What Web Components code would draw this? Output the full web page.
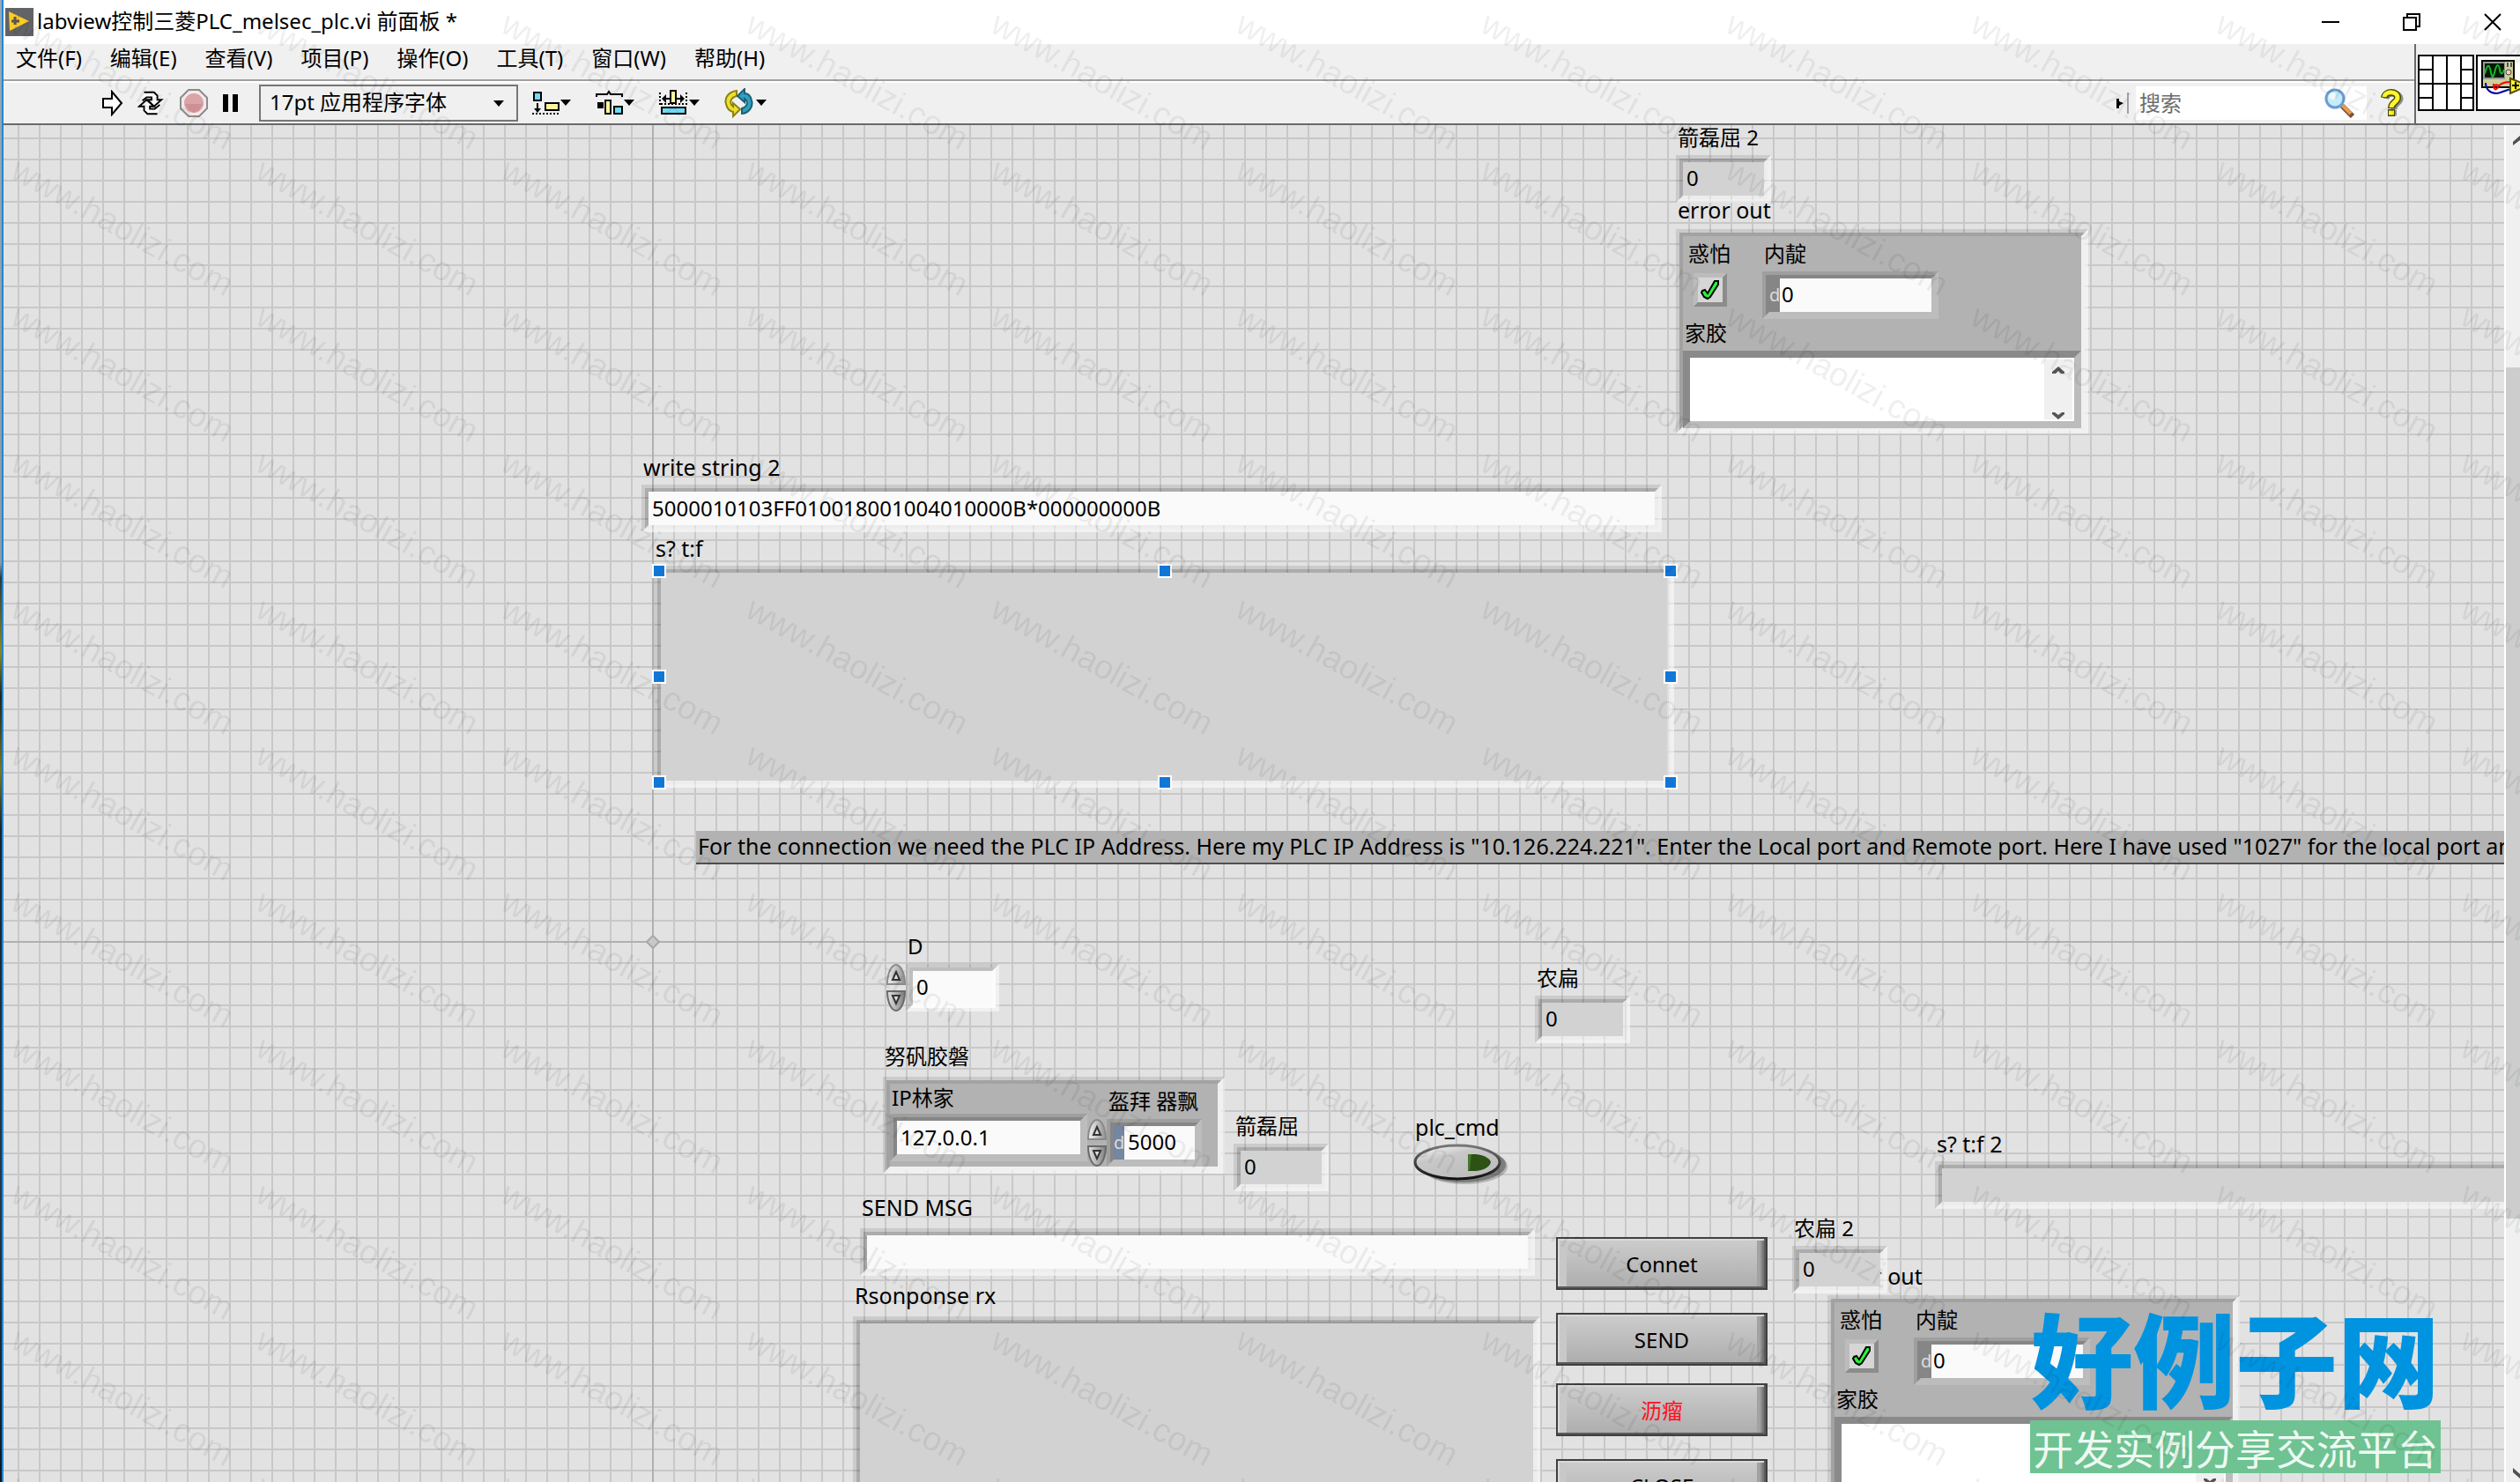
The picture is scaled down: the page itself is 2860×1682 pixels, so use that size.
<!DOCTYPE html>
<html lang="zh-CN">
<head>
<meta charset="utf-8">
<title>labview控制三菱PLC_melsec_plc.vi 前面板 *</title>
<style>
	html, body {
		margin: 0;
		height: 100%;
	}
	body {
		display: flex;
		overflow: hidden;
		font: 24px/32px "Noto Sans", "Noto Sans CJK SC", sans-serif;
		color: #000;
	}
</style>
</head>
<body>
<vi-window>
	<vi-title slot="title">labview控制三菱PLC_melsec_plc.vi 前面板 *</vi-title>
	<vi-menu slot="menu" items="文件(F),编辑(E),查看(V),项目(P),操作(O),工具(T),窗口(W),帮助(H)"></vi-menu>
	<vi-toolbar slot="toolbar"></vi-toolbar>
	<vi-connector slot="connector"></vi-connector>
	<vi-panel slot="panel">
		<vi-field kind="indicator" label="箭磊屈 2" value="0" style="left:1898px;top:-2px;width:108px"></vi-field>
		<vi-error style="left:1898px;top:80px"></vi-error>
		<vi-field kind="string" label="write string 2" value="5000010103FF010018001004010000B*000000000B" style="left:724px;top:372px;width:1158px"></vi-field>
		<vi-field kind="memo" label="s? t:f" style="left:738px;top:464px;width:1158px;--memo:252px"></vi-field>
		<vi-handles style="left:738px;top:500px;width:1160px;height:252px"></vi-handles>
		<vi-comment style="left:786px;top:801px">For the connection we need the PLC IP Address. Here my PLC IP Address is "10.126.224.221". Enter the Local port and Remote port. Here I have used "1027" for the local port and "5000" for the remote port.</vi-comment>
		<vi-origin style="left:729px;top:919px"></vi-origin>
		<vi-numeric spin label="D" value="0" style="left:1002px;top:916px;width:128px"></vi-numeric>
		<vi-field kind="indicator" label="农扁" value="0" style="left:1738px;top:952px;width:108px"></vi-field>
		<vi-address style="left:998px;top:1041px"></vi-address>
		<vi-field kind="indicator" label="箭磊屈" value="0" style="left:1396px;top:1120px;width:108px"></vi-field>
		<vi-led label="plc_cmd" style="left:1600px;top:1121px"></vi-led>
		<vi-field kind="string" label="SEND MSG" style="left:972px;top:1212px;width:766px;--gap:8px"></vi-field>
		<vi-field kind="memo" label="Rsonponse rx" style="left:964px;top:1312px;width:780px;--gap:8px;--memo:260px"></vi-field>
		<vi-button style="left:1762px;top:1262px">Connet</vi-button>
		<vi-button style="left:1762px;top:1348px">SEND</vi-button>
		<vi-button style="left:1762px;top:1428px;--ink:#ff0f1e">沥瘤</vi-button>
		<vi-button style="left:1762px;top:1514px">CLOSE</vi-button>
		<vi-field kind="indicator" label="s? t:f 2" style="left:2192px;top:1140px;width:760px"></vi-field>
		<vi-error style="left:2070px;top:1290px"></vi-error>
		<vi-field kind="indicator" label="农扁 2" value="0" style="left:2030px;top:1236px;width:108px"></vi-field>
	</vi-panel>
</vi-window>
<site-badge></site-badge>
<site-watermark text="www.haolizi.com"></site-watermark>

<script>
// sunken double frame shared by every panel control
const BEVEL = `
	.bevel, .bevel > .in {
		box-sizing: border-box;
		border: 4px solid;
		background-clip: padding-box;
	}
	.bevel { border-color: rgba(0,0,0,.1) rgba(255,255,255,.55) rgba(255,255,255,.55) rgba(0,0,0,.1); }
	.bevel > .in {
		display: block;
		width: 100%;
		margin: 0;
		border-color: rgba(0,0,0,.24) rgba(255,255,255,.4) rgba(255,255,255,.4) rgba(0,0,0,.24);
		border-radius: 0;
		outline: 0;
		font: inherit;
		color: inherit;
	}
	.dark { border-color: rgba(0,0,0,.1) rgba(255,255,255,.14) rgba(255,255,255,.14) rgba(0,0,0,.1); }
	.dark > .in { border-color: #868686 #bcbcbc #bcbcbc #868686; }
	.latin { font-size: 25px; }
`;

// latin-only captions are set one size up
const captionClass = text => /^[\x00-\x7f]+$/.test(text) ? 'latin' : '';

class BaseElement extends HTMLElement {
	constructor() {
		super();
		this.attachShadow({ mode: 'open' });
	}

	attr(name) { return this.getAttribute(name) || ''; }

	connectedCallback() { this.render(); }
}

class ViWindow extends BaseElement {
	render() {
		this.shadowRoot.innerHTML = `
			<style>
				:host {
					flex: 1;
					min-width: 0;
					display: flex;
					padding-left: 2px;
					background: linear-gradient(#93aabb, #8a9aa8 38%, #2c3a3a 39%, #8a8a20 44%, #1c2420 47%, #77761d 52%, #17202a 56%, #24384c 80%, #101820);
				}
				.frame {
					flex: 1;
					min-width: 0;
					display: flex;
					flex-direction: column;
					border-left: 2px solid #2585d0;
					background: #f0f0f0;
				}
				.head {
					display: flex;
					border-bottom: 2px solid #696969;
				}
				.bars { flex: 1; min-width: 0; }
				slot[name=menu] {
					display: block;
					height: 40px;
					border-bottom: 2px solid #a0a0a0;
				}
				slot[name=toolbar] {
					display: block;
					border-top: 2px solid #fff;
				}
				.body { flex: 1; display: flex; min-height: 0; }
			</style>
			<div class="frame">
				<slot name="title"></slot>
				<div class="head">
					<div class="bars"><slot name="menu"></slot><slot name="toolbar"></slot></div>
					<slot name="connector"></slot>
				</div>
				<div class="body"><slot name="panel"></slot><vi-scrollbar></vi-scrollbar></div>
			</div>
		`;
	}
}

class ViTitle extends BaseElement {
	render() {
		this.shadowRoot.innerHTML = `
			<style>
				:host {
					display: flex;
					align-items: center;
					height: 50px;
					background: #fff;
				}
				.logo { width: 32px; height: 32px; margin: 0 4px 0 2px; }
				h1 { flex: 1; margin: 0; padding-bottom: 2px; font: inherit; white-space: nowrap; }
				button {
					width: 62px;
					height: 50px;
					margin-left: 30px;
					padding: 0;
					border: 0;
					background: none;
				}
				button svg { display: block; margin: auto; }
			</style>
			<svg class="logo" viewBox="0 0 32 32"><path fill="#626366" d="M0 0h32v32H0z"/><path fill="#fecb25" d="M4 4l23 11L5 26z"/><path stroke="#55565a" stroke-width="3" d="M11 10v9M7 15h9"/></svg>
			<h1><slot></slot></h1>
			<button aria-label="最小化"><svg width="20" height="20"><path stroke="#000" stroke-width="2" d="M0 10h20"/></svg></button>
			<button aria-label="还原"><svg width="20" height="20"><path fill="none" stroke="#000" stroke-width="2" d="M1 5h14v14H1zM5 5V1h14v14h-4"/></svg></button>
			<button aria-label="关闭"><svg width="20" height="20"><path stroke="#000" stroke-width="2" d="M1 1l18 18M19 1L1 19"/></svg></button>
		`;
	}
}

class ViMenu extends BaseElement {
	render() {
		const items = this.attr('items').split(',');
		this.shadowRoot.innerHTML = `
			<style>
				:host { display: block; }
				nav { display: flex; gap: 32px; padding: 0 14px; }
				button {
					padding: 0;
					border: 0;
					background: none;
					font: inherit;
					color: inherit;
					white-space: nowrap;
				}
			</style>
			<nav>${ items.map(item => `<button>${ item }</button>`).join('') }</nav>
		`;
	}
}

class ViToolbar extends BaseElement {
	render() {
		const arrow = '<path d="M0 0h12l-6 7z"/>';
		this.shadowRoot.innerHTML = `
			<style>
				:host {
					display: flex;
					align-items: center;
					height: 46px;
					padding-left: 112px;
				}
				button { padding: 0; border: 0; background: none; }
				svg { display: block; }
				.run { display: flex; align-items: center; gap: 16px; }
				.font { position: relative; margin: 0 16px 0 22px; }
				.font svg { position: absolute; right: 14px; top: 18px; pointer-events: none; }
				select {
					appearance: none;
					display: block;
					width: 294px;
					height: 42px;
					padding: 0 12px 2px 10px;
					border: 2px solid #767676;
					border-radius: 0;
					background: #f0f0f0;
					font: inherit;
					color: inherit;
				}
				.align { display: flex; gap: 26px; }
				.search { display: flex; align-items: center; margin-left: auto; }
				.box {
					display: flex;
					align-items: center;
					width: 262px;
					height: 38px;
					margin-left: 8px;
					background: #fff;
				}
				input {
					flex: 1;
					min-width: 0;
					padding: 0 4px;
					border: 0;
					outline: 0;
					background: none;
					font: inherit;
				}
				input::placeholder { color: #6d6d6d; }
				.box svg { margin-right: 14px; }
				.help { margin: 0 12px 0 16px; }
			</style>
			<div class="run">
				<button aria-label="运行"><svg width="24" height="30"><path fill="#fff" stroke="#000" stroke-width="2" d="M1 10h10V2l11 13-11 13v-8H1z"/></svg></button>
				<button aria-label="连续运行"><svg width="32" height="32" viewBox="1 0 34 32"><path fill="#fff" stroke="#000" stroke-width="2" d="M9 3h12l4 4v5h5l-9 8-8-8h5V9h-6L7 13M25 29H13l-4-4v-5H3l9-8 9 8h-5v3h6l6-5"/></svg></button>
				<button aria-label="中止执行"><svg width="32" height="32"><path fill="#f4e9e9" stroke="#8b8b8b" stroke-width="2" d="M10 1h12l9 9v12l-9 9H10l-9-9V10z"/><circle cx="16" cy="16" r="11" fill="#d9a5a8"/><path fill="#cf9094" d="M6 17h20l-4 7-6 3-6-3z"/></svg></button>
				<button aria-label="暂停"><svg width="20" height="24"><path d="M1 2h6v20H1zM12 2h6v20h-6z"/></svg></button>
			</div>
			<div class="font">
				<select aria-label="字体"><option>17pt 应用程序字体</option></select>
				<svg width="14" height="10">${ arrow }</svg>
			</div>
			<div class="align">
				<button aria-label="对齐对象"><svg width="46" height="30"><path fill="#6fdcf7" stroke="#000" stroke-width="2" d="M2 3h8v9H2z"/><path fill="#fdf6a0" stroke="#000" stroke-width="2" d="M15 15h15v8H15z"/><path d="M5 15h2v6h3l-4 5-4-5h3z"/><path stroke="#000" stroke-width="2" stroke-dasharray="2 2" d="M0 27h30"/><g transform="translate(32 11)">${ arrow }</g></svg></button>
				<button aria-label="分布对象"><svg width="46" height="30"><path fill="none" stroke="#000" stroke-width="2" d="M1 8V5h12l2-3 2 3h13v3"/><path d="M2 14h7v7H2z"/><path fill="#fdf6a0" stroke="#000" stroke-width="2" d="M11 12h6v15h-6z"/><path fill="#6fdcf7" stroke="#000" stroke-width="2" d="M21 19h9v8h-9z"/><g transform="translate(32 11)">${ arrow }</g></svg></button>
				<button aria-label="调整对象大小"><svg width="48" height="32"><path stroke="#000" stroke-width="2" stroke-dasharray="2 2" d="M1 4v14M31 4v14M2 17h28"/><path d="M3 11l5-5v4h4v2H8v4zM29 11l-5-5v4h-4v2h4v4z"/><path fill="#fdf6a0" stroke="#000" stroke-width="2" d="M13 2h6v14h-6z"/><path fill="#6fdcf7" stroke="#000" stroke-width="2" d="M3 21h27v7H3z"/><g transform="translate(34 12)">${ arrow }</g></svg></button>
				<button aria-label="重新排序"><svg width="50" height="34"><path fill="#eedf2b" stroke="#8b8212" stroke-width="2" d="M14 3C4 4 0 12 2 18c1 5 4 8 8 9v5l8-8-8-7v4c-5-4-3-10 4-12z"/><path fill="#2f9fc0" stroke="#1d6075" stroke-width="2" d="M20 29c9-1 13-9 11-15-1-5-4-8-8-8V1l-8 8 8 7v-4c5 4 3 9-3 11z"/><g transform="translate(36 13)">${ arrow }</g></svg></button>
			</div>
			<div class="search">
				<svg width="14" height="26"><path d="M0 8h3v3l5 2-5 3v3H0z"/><path fill="#a0a0a0" d="M12 1h2v24h-2z"/></svg>
				<label class="box"><input type="text" placeholder="搜索" aria-label="搜索"><svg width="34" height="34"><path stroke="#77503a" stroke-width="6" d="M20 20l12 12"/><path stroke="#e79b4f" stroke-width="4" d="M20 19l10 10"/><circle cx="12" cy="12" r="10" fill="#c5ecfb" stroke="#6b9ed0" stroke-width="3"/><circle cx="9" cy="9" r="4" fill="#fff" opacity=".7"/></svg></label>
				<button class="help" aria-label="即时帮助"><svg width="26" height="32"><path fill="none" stroke="#8f8f8f" stroke-width="7" d="M6 11c1-8 15-8 16 0 0 5-7 5-7 12M12 27h6"/><path fill="none" stroke="#4a4700" stroke-width="8" d="M4 10c1-8 15-8 15 0 0 5-7 5-7 12M8 27h8"/><path fill="none" stroke="#fdf52c" stroke-width="5" d="M4 9c1-7 15-7 15 1 0 5-7 5-7 11M9 27h6"/></svg></button>
			</div>
		`;
	}
}

class ViConnector extends BaseElement {
	render() {
		this.shadowRoot.innerHTML = `
			<style>
				:host {
					display: flex;
					gap: 2px;
					width: 116px;
					padding: 12px 0 0 2px;
					border-left: 2px solid #696969;
					overflow: hidden;
				}
				svg { flex: none; }
			</style>
			<svg width="64" height="64"><path fill="#fff" stroke="#000" stroke-width="2" d="M1 1h62v62H1z"/><path fill="none" stroke="#000" stroke-width="2" d="M17 1v62M33 1v62M49 1v62M1 33h62M1 17h16M49 17h14M1 49h16M49 49h14"/></svg>
			<svg width="64" height="64"><path fill="#fff" stroke="#000" stroke-width="2" d="M1 1h62v62H1z"/><path fill="#cfcf9c" stroke="#000" stroke-width="2" d="M7 7h36v30H7z"/><path fill="#999" d="M8 8h25v20H8z"/><path fill="#001b00" d="M10 10h22v16H10z"/><path fill="none" stroke="#18b52c" stroke-width="2" d="M10 22c3-12 5-12 7-2s3 4 5-3 4-6 5 0 3 6 5 0"/><circle cx="37" cy="20" r="3" fill="#ffd0b0" stroke="#444"/><path stroke="#555" stroke-width="2" d="M36 9v5M40 9v5"/><path fill="none" stroke="#0000a0" stroke-width="2" d="M11 32c0 8 6 12 12 12s10-5 20-5"/><path fill="none" stroke="#f00" stroke-width="2" d="M20 33c0 10 5 6 5 3s-6-2-4 3M25 36c4-4 8-5 14-5"/><path fill="#fdf52c" stroke="#555000" stroke-width="2" d="M39 27l20 8-20 9z"/><path stroke="#000" stroke-width="2" d="M41 35h8M45 31v8"/></svg>
		`;
	}
}

class ViScrollbar extends BaseElement {
	render() {
		this.shadowRoot.innerHTML = `
			<style>
				:host {
					flex: none;
					width: 16px;
					display: flex;
					flex-direction: column;
					justify-content: space-between;
					align-items: flex-end;
					border-left: 2px solid #fff;
					background: linear-gradient(#cdcdcd, #cdcdcd) 0 275px / 100% 966px no-repeat #f0f0f0;
				}
				svg { display: block; margin: 12px 0 4px; }
			</style>
			<svg width="8" height="12"><path d="M0 11V7l8-7v5z" fill="#505050"/></svg>
			<svg width="8" height="12"><path d="M0 0v5l8 7V7z" fill="#505050"/></svg>
		`;
	}
}

class ViPanel extends BaseElement {
	render() {
		this.shadowRoot.innerHTML = `
			<style>
				:host {
					flex: 1;
					min-width: 0;
					display: block;
					position: relative;
					overflow: hidden;
					background:
						linear-gradient(#b0b0b0, #b0b0b0) 736px 0 / 2px 100% no-repeat,
						linear-gradient(#b0b0b0, #b0b0b0) 0 926px / 100% 2px no-repeat,
						linear-gradient(90deg, #c8c8c8 2px, transparent 2px) 16px 0 / 24px 24px,
						linear-gradient(#c8c8c8 2px, transparent 2px) 0 14px / 24px 24px,
						#e2e2e2;
				}
				::slotted(*) { position: absolute; }
			</style>
			<slot></slot>
		`;
	}
}

class ViField extends BaseElement {
	render() {
		const kind = this.attr('kind');
		const value = this.attr('value');
		const label = this.attr('label');
		const control = {
			indicator: `<output class="in" id="f">${ value }</output>`,
			string: `<input class="in" id="f" type="text" value="${ value }">`,
			memo: `<textarea class="in" id="f" readonly></textarea>`
		}[kind];
		this.shadowRoot.innerHTML = `
			<style>
				${ BEVEL }
				:host { display: flex; flex-direction: column; gap: var(--gap, 4px); }
				label { padding-left: 2px; height: 32px; white-space: nowrap; }
				.bevel > .in { height: 46px; padding: 2px 4px; background-color: #d2d2d2; }
				.bevel > input.in { padding: 0 4px 2px; background-color: #fafafa; }
				.bevel > textarea.in { height: calc(var(--memo) - 8px); resize: none; }
			</style>
			<label for="f" class="${ captionClass(label) }">${ label }</label>
			<div class="bevel ${ this.hasAttribute('dark') ? 'dark' : '' }">${ control }</div>
		`;
	}
}

class ViNumeric extends BaseElement {
	render() {
		const spin = this.hasAttribute('spin') ? `
			<div class="spin">
				<button aria-label="增加"><svg width="22" height="26"><defs><linearGradient id="g"><stop stop-color="#f4f4f4"/><stop offset="1" stop-color="#8f8f8f"/></linearGradient></defs><path fill="url(#g)" stroke="#8a8a8a" stroke-width="2" d="M1 23C1 10 6 1 11 1s10 9 10 22z"/><path fill="#ddd" stroke="#333" stroke-width="2" d="M7 18l4-9 4 9z"/></svg></button>
				<button aria-label="减少"><svg width="22" height="26"><defs><linearGradient id="g2"><stop stop-color="#e4e4e4"/><stop offset="1" stop-color="#7f7f7f"/></linearGradient></defs><path fill="url(#g2)" stroke="#6a6a6a" stroke-width="2" d="M1 3c0 13 5 22 10 22s10-9 10-22z"/><path fill="#ddd" stroke="#333" stroke-width="2" d="M7 8l4 9 4-9z"/></svg></button>
			</div>` : '';
		const radix = this.hasAttribute('radix') ? `<span class="radix">d</span>` : '';
		this.shadowRoot.innerHTML = `
			<style>
				${ BEVEL }
				:host { display: flex; flex-direction: column; gap: 4px; }
				label { padding-left: ${ spin ? 24 : 2 }px; height: 32px; white-space: nowrap; }
				.row { display: flex; }
				.spin { display: flex; flex-direction: column; justify-content: space-between; width: 22px; }
				button { padding: 0; border: 0; background: none; }
				svg { display: block; }
				.bevel { flex: 1; min-width: 0; }
				.bevel > .in { display: flex; height: 46px; background: #fafafa; }
				.radix {
					width: 12px;
					background: var(--radix, #868686);
					color: #dcdcdc;
					font-size: 20px;
					line-height: 38px;
				}
				input {
					flex: 1;
					width: 0;
					padding: 0 var(--pad, 4px) 2px;
					border: 0;
					outline: 0;
					background: none;
					font: inherit;
				}
			</style>
			<label for="n">${ this.attr('label') }</label>
			<div class="row">
				${ spin }
				<div class="bevel ${ radix ? 'dark' : '' }"><div class="in">${ radix }<input id="n" type="text" value="${ this.attr('value') }"></div></div>
			</div>
		`;
	}
}

class ViError extends BaseElement {
	render() {
		this.shadowRoot.innerHTML = `
			<style>
				${ BEVEL }
				:host { display: block; width: 468px; }
				h2 { margin: 0 0 6px; padding-left: 2px; font-size: 25px; font-weight: 400; }
				.bevel > .in { height: 224px; background: #b2b2b2; border-color: #a2a2a2 #f0f0f0 #f0f0f0 #a2a2a2; }
				.top { display: flex; gap: 36px; padding: 4px 0 0 6px; }
				.status { display: flex; flex-direction: column; gap: 6px; }
				.status input {
					appearance: none;
					box-sizing: border-box;
					width: 38px;
					height: 38px;
					margin: 0 0 0 6px;
					border: 5px solid;
					border-color: #bcbcbc #8c8c8c #8c8c8c #bcbcbc;
					background: #d6d6d6;
				}
				.tick { position: relative; display: flex; }
				.tick svg { position: absolute; left: 14px; top: 7px; pointer-events: none; }
				vi-numeric { width: 200px; --pad: 2px; }
				.source { display: block; height: 32px; padding-left: 2px; }
				.text {
					display: flex;
					box-sizing: border-box;
					height: 88px;
					margin-top: 4px;
					border: 8px solid;
					border-color: #8a8a8a #bcbcbc #bcbcbc #8a8a8a;
					background: #fff;
				}
				textarea { flex: 1; margin: 0; padding: 0; border: 0; outline: 0; resize: none; background: none; font: inherit; }
				.bar {
					display: flex;
					flex-direction: column;
					justify-content: space-between;
					align-items: center;
					width: 32px;
					margin: 2px 2px 2px 0;
					padding: 8px 0 0;
					box-sizing: border-box;
					background: #f0f0f0;
				}
				svg { display: block; }
			</style>
			<h2>error out</h2>
			<div class="bevel">
				<div class="in">
					<div class="top">
						<div class="status">
							<label for="s">惑怕</label>
							<div class="tick"><input id="s" type="checkbox" checked><svg width="22" height="24"><path fill="#28f43c" stroke="#000" stroke-width="2" d="M2 13l3-1 3 4 8-14h4v4L11 20l-3 2-4-2-3-5z"/></svg></div>
						</div>
						<vi-numeric radix label="内靛" value="0"></vi-numeric>
					</div>
					<label class="source" for="t">家胶</label>
					<div class="text">
						<textarea id="t"></textarea>
						<div class="bar">
							<svg width="14" height="8"><path d="M0 8V6l7-6 7 6v2h-4L7 5 4 8z" fill="#555"/></svg>
							<svg width="14" height="8"><path d="M0 0v2l7 6 7-6V0h-3L7 3 3 0z" fill="#555"/></svg>
						</div>
					</div>
				</div>
			</div>
		`;
	}
}

class ViAddress extends BaseElement {
	render() {
		this.shadowRoot.innerHTML = `
			<style>
				${ BEVEL }
				:host { display: block; width: 388px; }
				h2 { margin: 0 0 7px; padding-left: 2px; font: inherit; }
				.bevel > .in { display: flex; height: 102px; background: #b2b2b2; border-color: #a2a2a2 #f0f0f0 #f0f0f0 #a2a2a2; }
				vi-field { width: 224px; --gap: 2px; }
				vi-numeric { width: 130px; margin-top: 4px; --radix: #7486a0; }
			</style>
			<h2>努矾胶磐</h2>
			<div class="bevel">
				<div class="in">
					<vi-field kind="string" dark label="IP林家" value="127.0.0.1"></vi-field>
					<vi-numeric spin radix label="盔拜 器飘" value="5000"></vi-numeric>
				</div>
			</div>
		`;
	}
}

class ViLed extends BaseElement {
	render() {
		this.shadowRoot.innerHTML = `
			<style>
				:host { display: flex; flex-direction: column; }
				label { padding-left: 2px; font-size: 25px; }
				button { padding: 0; border: 0; background: none; }
				svg { display: block; }
			</style>
			<label for="b">${ this.attr('label') }</label>
			<button id="b"><svg width="110" height="54">
				<defs>
					<linearGradient id="g" x1="0" y1="0" x2=".6" y2="1"><stop stop-color="#fff"/><stop offset=".4" stop-color="#c8c8c8"/><stop offset="1" stop-color="#bcbcbc"/></linearGradient>
					<linearGradient id="r" x1="0" y1="0" x2="0" y2="1"><stop stop-color="#777"/><stop offset="1" stop-color="#111"/></linearGradient>
				</defs>
				<ellipse cx="58" cy="29" rx="49" ry="20" fill="#000" opacity=".2"/>
				<ellipse cx="56" cy="27" rx="49" ry="20" fill="#000" opacity=".3"/>
				<ellipse cx="50" cy="24" rx="48" ry="19" fill="url(#g)" stroke="url(#r)" stroke-width="3"/>
				<path fill="#2c5214" d="M62 15h9c10 1 16 5 17 9-1 5-7 9-17 10h-9z"/>
				<path fill="#47752b" d="M62 15h4l-2 18h-2z"/>
			</svg></button>
		`;
	}
}

class ViButton extends BaseElement {
	render() {
		this.shadowRoot.innerHTML = `
			<style>
				:host { display: block; }
				button {
					display: block;
					width: 240px;
					height: 60px;
					padding: 2px 0 0;
					border: 2px solid #404040;
					background: linear-gradient(#cdcdcd, #adadad);
					box-shadow:
						inset -2px -2px #5c5c5c,
						inset 2px 2px #d8d8d8,
						inset -4px 0 #757575,
						inset -6px 0 #8e8e8e,
						inset -10px 0 #a2a2a2,
						inset 10px 0 #c8c8c8;
					font: inherit;
					color: var(--ink, #000);
				}
			</style>
			<button><slot></slot></button>
		`;
	}
}

class ViComment extends BaseElement {
	render() {
		this.shadowRoot.innerHTML = `
			<style>
				:host {
					display: block;
					padding: 1px 2px 3px;
					border-bottom: 2px solid #505050;
					background: #b2b2b2;
					font-size: 25px;
					white-space: nowrap;
				}
			</style>
			<slot></slot>
		`;
	}
}

class ViHandles extends BaseElement {
	render() {
		this.shadowRoot.innerHTML = `
			<style>
				:host {
					display: grid;
					grid-template-columns: repeat(3, 12px);
					justify-content: space-between;
					align-content: space-between;
					pointer-events: none;
				}
				i { width: 12px; height: 12px; margin: -2px; border: 2px solid #fff; background: #1177d7; }
				i:nth-of-type(5) { visibility: hidden; }
			</style>
			${ '<i></i>'.repeat(9) }
		`;
	}
}

class ViOrigin extends BaseElement {
	render() {
		this.shadowRoot.innerHTML = `
			<style>:host { display: block; } svg { display: block; }</style>
			<svg width="16" height="16"><path fill="#c8c8c8" stroke="#a8a8a8" stroke-width="2" d="M8 1l7 7-7 7-7-7z"/></svg>
		`;
	}
}

class SiteBadge extends BaseElement {
	render() {
		this.shadowRoot.innerHTML = `
			<style>
				:host {
					position: absolute;
					right: 90px;
					bottom: 10px;
					width: 466px;
					text-align: center;
					font-family: "Noto Sans CJK SC", sans-serif;
					white-space: nowrap;
				}
				strong { display: block; padding-bottom: 12px; font-size: 116px; line-height: 124px; font-weight: 900; color: #0093e0; }
				span { display: block; font-size: 46px; line-height: 60px; background: #6fc292; color: #eefaf2; }
			</style>
			<strong>好例子网</strong>
			<span>开发实例分享交流平台</span>
		`;
	}
}

class SiteWatermark extends BaseElement {
	render() {
		const cols = Math.ceil(innerWidth / 278);
		const rows = Math.ceil(innerHeight / 166);
		this.shadowRoot.innerHTML = `
			<style>
				:host {
					position: absolute;
					inset: 0;
					display: grid;
					grid-template-columns: repeat(${ cols }, 278px);
					grid-auto-rows: 166px;
					padding: 3px 0 0 10px;
					overflow: hidden;
					pointer-events: none;
					font: 38px/38px "Liberation Sans", sans-serif;
					color: rgba(0,0,0,.08);
				}
				span { justify-self: start; align-self: start; transform: rotate(29deg); transform-origin: 0 32px; }
			</style>
			${ `<span>${ this.attr('text') }</span>`.repeat(cols * rows) }
		`;
	}
}

customElements.define('vi-window', ViWindow);
customElements.define('vi-title', ViTitle);
customElements.define('vi-menu', ViMenu);
customElements.define('vi-toolbar', ViToolbar);
customElements.define('vi-connector', ViConnector);
customElements.define('vi-scrollbar', ViScrollbar);
customElements.define('vi-panel', ViPanel);
customElements.define('vi-field', ViField);
customElements.define('vi-numeric', ViNumeric);
customElements.define('vi-error', ViError);
customElements.define('vi-address', ViAddress);
customElements.define('vi-led', ViLed);
customElements.define('vi-button', ViButton);
customElements.define('vi-comment', ViComment);
customElements.define('vi-handles', ViHandles);
customElements.define('vi-origin', ViOrigin);
customElements.define('site-badge', SiteBadge);
customElements.define('site-watermark', SiteWatermark);
</script>
</body>
</html>
